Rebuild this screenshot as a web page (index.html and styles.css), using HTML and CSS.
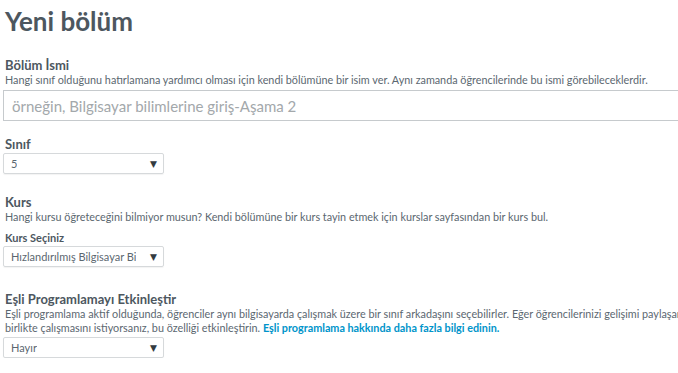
FILE: index.html
```html
<!DOCTYPE html>
<html lang="tr">
<head>
<meta charset="utf-8">
<title>Yeni bölüm</title>
<link rel="stylesheet" href="styles.css">
</head>
<body>
<main class="page">
  <h1 class="title">Yeni bölüm</h1>

  <section class="field field-name">
    <div class="label">Bölüm İsmi</div>
    <div class="desc">Hangi sınıf olduğunu hatırlamana yardımcı olması için kendi bölümüne bir isim ver. Aynı zamanda öğrencilerinde bu ismi görebileceklerdir.</div>
    <div class="text-input"><span class="placeholder">örneğin, Bilgisayar bilimlerine giriş-Aşama 2</span></div>
  </section>

  <section class="field field-grade">
    <div class="label">Sınıf</div>
    <div class="select"><span class="select-value">5</span><span class="arrow">▼</span></div>
  </section>

  <section class="field field-course">
    <div class="label">Kurs</div>
    <div class="desc">Hangi kursu öğreteceğini bilmiyor musun? Kendi bölümüne bir kurs tayin etmek için kurslar sayfasından bir kurs bul.</div>
    <div class="sublabel">Kurs Seçiniz</div>
    <div class="select"><span class="select-value">Hızlandırılmış Bilgisayar Bi</span><span class="arrow">▼</span></div>
  </section>

  <section class="field field-pair">
    <div class="label">Eşli Programlamayı Etkinleştir</div>
    <div class="desc">Eşli programlama aktif olduğunda, öğrenciler aynı bilgisayarda çalışmak üzere bir sınıf arkadaşını seçebilirler. Eğer öğrencilerinizi gelişimi paylaşarak<br>birlikte çalışmasını istiyorsanız, bu özelliği etkinleştirin. <a class="link" href="#">Eşli programlama hakkında daha fazla bilgi edinin.</a></div>
    <div class="select select-after-desc"><span class="select-value">Hayır</span><span class="arrow">▼</span></div>
  </section>
</main>
</body>
</html>
```
FILE: styles.css
```css
html, body {
  margin: 0;
  padding: 0;
  background: #ffffff;
  overflow: hidden;
}

body {
  font-family: Lato, "Open Sans", "Liberation Sans", sans-serif;
  color: #4d575f;
}

.page {
  width: 760px;
  padding: 0 0 0 3px;
}

.title {
  margin: 0;
  padding: 5px 0 0 2px;
  font-size: 26px;
  line-height: 32px;
  font-weight: 700;
  color: #4d575f;
}

.field {
  display: flex;
  flex-direction: column;
  align-items: flex-start;
}

.field-name { margin-top: 20px; }
.field-grade { margin-top: 15px; }
.field-course { margin-top: 20px; }
.field-pair { margin-top: 24px; }

.label {
  padding-left: 2px;
  font-size: 13px;
  line-height: 16px;
  font-weight: 700;
  color: #4d575f;
}

.desc {
  padding-left: 2px;
  font-size: 10.8px;
  line-height: 14px;
  color: #5b6770;
  white-space: nowrap;
}

.sublabel {
  margin-top: 7px;
  padding-left: 2px;
  font-size: 11px;
  line-height: 14px;
  font-weight: 700;
  color: #4d575f;
}

.link {
  color: #0094ca;
  font-weight: 700;
  text-decoration: none;
}

.text-input {
  box-sizing: border-box;
  width: 720px;
  height: 31px;
  margin-top: 3px;
  border: 1px solid #c6cacd;
  padding: 0 8px;
  display: flex;
  align-items: center;
}

.placeholder {
  font-size: 15px;
  color: #a3a8ab;
}

.select {
  box-sizing: border-box;
  width: 161px;
  height: 21px;
  margin-top: 1px;
  border: 1px solid #d6d9db;
  border-radius: 2px;
  box-shadow: 0 1px 1px rgba(0, 0, 0, 0.05);
  padding: 0 6px 0 7px;
  display: flex;
  align-items: center;
  justify-content: space-between;
}

.select-after-desc {
  margin-top: 2px;
}

.select-value {
  font-size: 11px;
  color: #5b6770;
  white-space: nowrap;
  overflow: hidden;
}

.arrow {
  font-size: 9px;
  color: #333a40;
  font-family: "DejaVu Sans", sans-serif;
}
```
